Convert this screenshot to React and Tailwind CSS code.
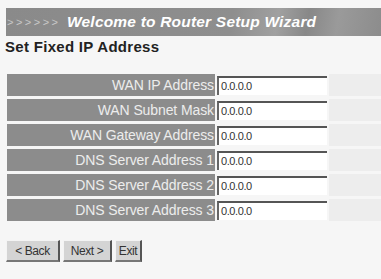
import React from "react";

const rows = [
  "WAN IP Address",
  "WAN Subnet Mask",
  "WAN Gateway Address",
  "DNS Server Address 1",
  "DNS Server Address 2",
  "DNS Server Address 3",
];

function Btn({ children, w }) {
  return (
    <div
      className={`h-[22px] ${w} flex items-center justify-center bg-[#d4d4d4] text-[12px] text-[#333] border-t border-l border-t-[#f4f4f4] border-l-[#f4f4f4] border-r-2 border-b-2 border-r-[#555] border-b-[#777]`}
      style={{ fontFamily: '"Liberation Sans", Arial, sans-serif', letterSpacing: "-0.4px" }}
    >
      {children}
    </div>
  );
}

export default function App() {
  return (
    <div
      className="w-[381px] h-[279px] bg-[#f6f6f6] overflow-hidden pt-[8px]"
      style={{ fontFamily: '"Liberation Sans", Arial, sans-serif' }}
    >
      <div className="ml-[6px] h-[28px] flex items-center bg-[linear-gradient(100deg,#8a8a8a_0%,#8e8e8e_60%,#a0a0a0_72%,#888_80%,#9a9a9a_88%,#8c8c8c_100%)]">
        <span className="text-[#c8c8c8] text-[11px] tracking-[2.5px] w-[61px] pl-[1px]">&gt;&gt;&gt;&gt;&gt;&gt;</span>
        <span className="text-white italic font-bold text-[15.5px] tracking-[0.2px]">
          Welcome to Router Setup Wizard
        </span>
      </div>
      <div className="pl-[5px] pt-[2px] text-[15px] font-bold text-[#222] leading-[18px] tracking-[0.3px]">
        Set Fixed IP Address
      </div>
      <div className="mt-[18px] ml-[7px] flex flex-col gap-[3px]">
        {rows.map((r) => (
          <div key={r} className="flex h-[22px]">
            <div className="w-[208px] bg-[#8c8c8c] text-[#ececec] text-[14px] flex items-center justify-end pr-[1px] tracking-[-0.1px]">
              {r}
            </div>
            <div className="w-[112px] ml-[2px] flex items-center">
              <div className="w-[110px] h-[19px] bg-white border-t-2 border-l-2 border-t-[#555] border-l-[#666] text-[11px] text-[#333] flex items-center pl-[2px] tracking-[-0.4px]">
                0.0.0.0
              </div>
            </div>
            <div className="flex-1 bg-[#ededed]" />
          </div>
        ))}
      </div>
      <div className="mt-[19px] ml-[6px] flex gap-[3px]">
        <Btn w="w-[54px]">&lt; Back</Btn>
        <Btn w="w-[49px]">Next &gt;</Btn>
        <Btn w="w-[27px]">Exit</Btn>
      </div>
    </div>
  );
}
